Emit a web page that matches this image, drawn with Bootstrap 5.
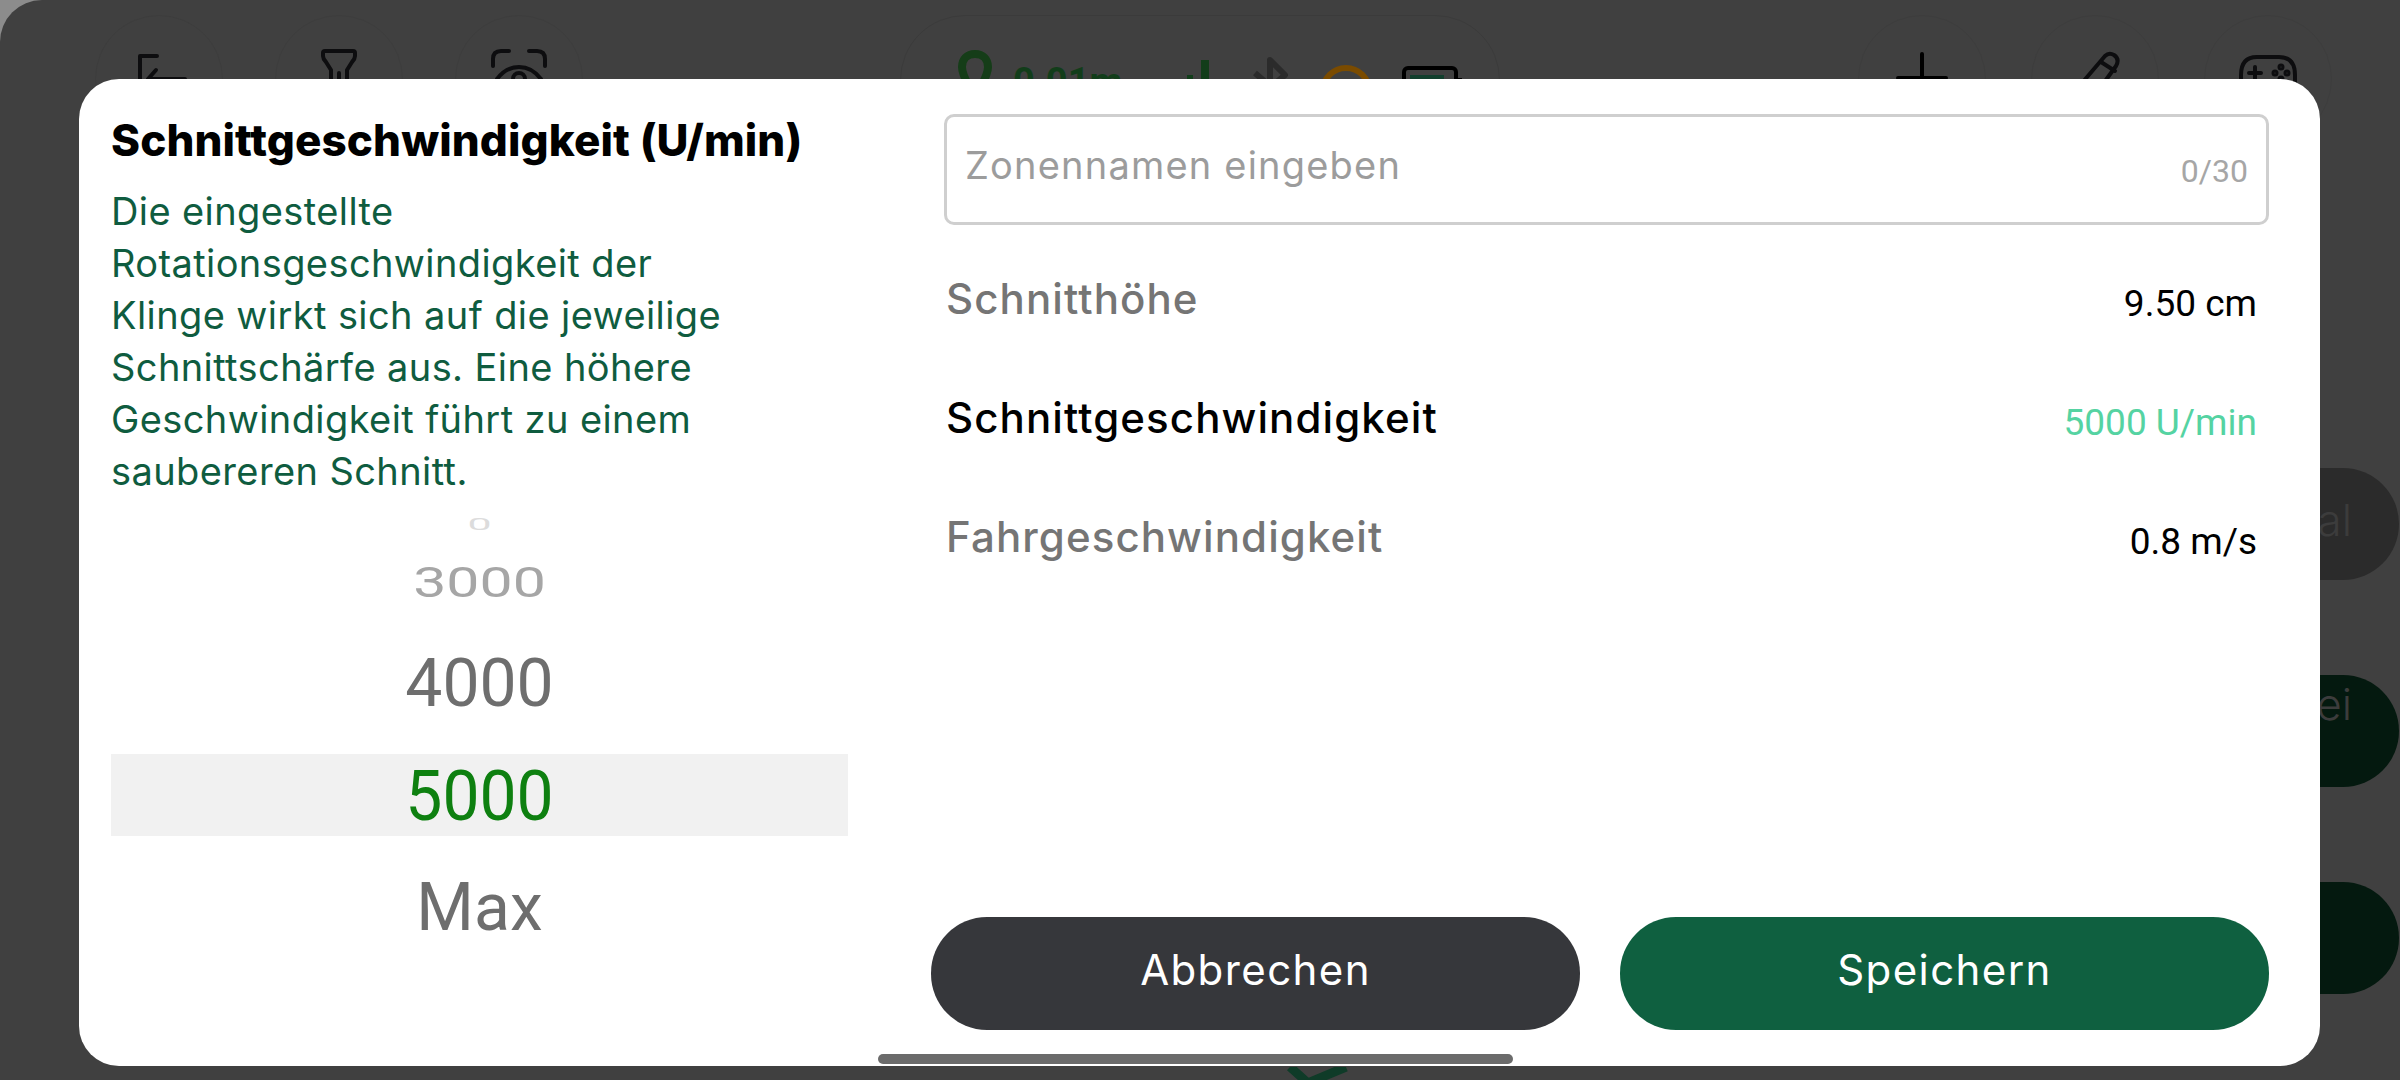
<!DOCTYPE html>
<html lang="de">
<head>
  <meta charset="UTF-8">
  <title>Schnittgeschwindigkeit</title>
  <link href="https://cdn.jsdelivr.net/npm/bootstrap@5.3.0/dist/css/bootstrap.min.css" rel="stylesheet">
  <style>
    html, body { height: 100%; margin: 0; }
    body { background: #8c8c8c; font-family: "Inter", "Liberation Sans", sans-serif; overflow: hidden; }

    /* dimmed screen behind the dialog */
    .screen { width: 2400px; height: 1080px; background: #404040; border-top-left-radius: 42px; overflow: hidden; }
    .topbar { padding: 15px 68px 0 95px; }
    .left-btns { gap: 52px; }
    .right-btns { gap: 45px; }
    .round-btn { width: 128px; height: 128px; border: 1px solid #3d3d3d; border-radius: 50%; }
    .ico-back { margin-left: 5px; }
    .ico-plus { padding-top: 36px; }
    .ico-pen { padding-top: 34px; }
    .ico-pad { padding-top: 38px; }
    .status-pill { width: 600px; height: 130px; margin-left: 317px; padding: 34px 0 0 57px; border: 1px solid #3b3b3b; border-radius: 70px; }
    .dist-txt { font-family: "Roboto", sans-serif; font-size: 38px; font-weight: 700; color: #123d1a; line-height: 1; margin: 13px 65px 0 21px; }
    .st-bt { margin: 7px 30px 0 41px; }
    .st-arc { margin: 15px 30px 0 0; }
    .st-bat { margin-top: 16px; }
    .side-pills { margin-top: 323px; gap: 95px; }
    .side-pill { width: 400px; height: 112px; margin-right: 1px; padding-right: 47px; border-radius: 56px; font-size: 44px; color: #3c3c3c; font-weight: 300; }
    .side-grey { background: #2b2b2b; line-height: 104px; }
    .side-dark { background: #04190f; line-height: 58px; }
    .bg-check { margin: 73px 0 0 1280px; }

    /* dialog */
    .dialog { position: absolute; left: 79px; top: 79px; width: 2241px; height: 987px; background: #fff; border-radius: 40px; padding: 35px 51px 36px 32px; }
    .left-col { width: 737px; margin-right: 83px; flex-shrink: 0; }
    .dlg-title { font-size: 44px; font-weight: 800; letter-spacing: .1px; line-height: 52px; color: #000; margin: 0 0 19px; }
    .dlg-desc { font-size: 38px; letter-spacing: .4px; line-height: 52px; color: #0f5c3f; margin: 0 0 15px; }

    .wheel { gap: 30px; font-family: "Roboto", sans-serif; }
    .wheel-item { display: flex; align-items: center; justify-content: center; height: 82px; font-size: 66px; color: #6e6e6e; }
    .wheel-item span { display: block; }
    .wheel-far { height: 24px; margin-bottom: -14px; font-size: 43px; color: #dcdcdc; }
    .wheel-far span { transform: scaleY(.4); }
    .wheel-near { height: 60px; padding-top: 2px; font-size: 59px; color: #a6a6a6; }
    .wheel-near span { transform: scaleY(.72); }
    .wheel-sel { background: #f1f1f1; color: #0e8010; }
    .wheel-sel span { transform: scaleY(1.07); }

    .zone-box { height: 111px; margin-left: 13px; padding: 0 18px 0 18px; border: 3px solid #cfcfcf; border-radius: 10px; }
    .zone-box input { font-size: 38px; letter-spacing: 1.2px; padding: 0; margin-top: -8px; color: #333; }
    .zone-box input::placeholder { color: #9c9c9c; }
    .zone-count { font-family: "Roboto", sans-serif; font-size: 32px; color: #a6a6a6; margin-top: 2px; }

    .param-rows { margin: 45px 12px 0 15px; gap: 59px; }
    .param-row { height: 60px; }
    .param-name { font-size: 42px; font-weight: 500; letter-spacing: 1.1px; color: #757575; margin-top: -3px; }
    .param-val { font-family: "Roboto", sans-serif; font-size: 37px; color: #000; margin-top: 7px; }
    .param-on .param-name { color: #000; }
    .param-on .param-val { color: #55d3a2; }

    .act-btn { width: 649px; height: 113px; border: 0; border-radius: 56px; padding: 0 0 8px; color: #fff; font-size: 42px; letter-spacing: 1.4px; }
    .act-grey, .act-grey:hover { background: #36373b; color: #fff; }
    .act-green, .act-green:hover { background: #0f6040; color: #fff; }
    .home-bar { position: absolute; left: 878px; top: 1054px; width: 635px; height: 10px; border-radius: 5px; background: #6b6b6b; }
  </style>
</head>
<body>

<div class="screen">
  <div class="topbar d-flex">
    <div class="left-btns d-flex">
      <div class="round-btn d-flex align-items-center justify-content-center">
        <svg class="ico-back" width="50" height="52" viewBox="0 0 50 52" fill="none" stroke="#0d0d0f" stroke-width="4" stroke-linecap="round" stroke-linejoin="round"><path d="M20 3H3V49"/><path d="M48 26H11l8-9M11 26l8 9"/></svg>
      </div>
      <div class="round-btn d-flex align-items-center justify-content-center">
        <svg width="38" height="62" viewBox="0 0 38 62" fill="none" stroke="#0d0d0f" stroke-width="4" stroke-linecap="round" stroke-linejoin="round"><path d="M5 3h28q2 0 2 2v3q0 3-3 6l-5 8v36H11V22l-5-8Q3 11 3 8V5q0-2 2-2z"/><path d="M19 25v9"/></svg>
      </div>
      <div class="round-btn d-flex align-items-center justify-content-center">
        <svg width="58" height="62" viewBox="0 0 58 62" fill="none" stroke="#0d0d0f" stroke-width="4" stroke-linecap="round" stroke-linejoin="round"><path d="M3 18V11q0-8 8-8h8M39 3h8q8 0 8 8v7M3 44v7q0 8 8 8h8M39 59h8q8 0 8-8v-7"/><path d="M7 31q9-12 22-12t22 12q-9 12-22 12T7 31z"/><circle cx="29" cy="31" r="6"/></svg>
      </div>
    </div>

    <div class="status-pill d-flex align-items-start">
      <svg width="34" height="50" viewBox="0 0 34 50" fill="none"><path d="M17 4C9 4 4 9 4 17c0 10 13 29 13 29s13-19 13-29c0-8-5-13-13-13z" stroke="#153d18" stroke-width="8"/></svg>
      <span class="dist-txt">0.01m</span>
      <svg width="24" height="60" viewBox="0 0 24 60" fill="#123d1a"><rect x="0" y="25" width="6" height="35"/><rect x="14" y="10" width="8" height="50"/></svg>
      <svg class="st-bt" width="38" height="60" viewBox="0 0 38 60" fill="none" stroke="#2b2b2b" stroke-width="6" stroke-linejoin="round"><path d="M3 16l30 26-15 15V3l15 15L3 44"/></svg>
      <svg class="st-arc" width="52" height="40" viewBox="0 0 52 40" fill="none" stroke="#7a4b00" stroke-width="6"><path d="M3 26a23 23 0 0 1 46 0"/></svg>
      <svg class="st-bat" width="62" height="40" viewBox="0 0 62 40" fill="none"><rect x="2" y="2" width="52" height="36" rx="4" stroke="#000" stroke-width="4"/><rect x="8" y="9" width="34" height="22" fill="#123f2d"/><path d="M56 12h4v16h-4z" fill="#000"/></svg>
    </div>

    <div class="right-btns d-flex ms-auto">
      <div class="round-btn ico-plus d-flex justify-content-center">
        <svg width="52" height="52" viewBox="0 0 52 52" fill="none" stroke="#000" stroke-width="4" stroke-linecap="round"><path d="M26 2v48M2 26h48"/></svg>
      </div>
      <div class="round-btn ico-pen d-flex justify-content-center">
        <svg width="60" height="60" viewBox="0 0 60 60" fill="none" stroke="#0d0d0f" stroke-width="4" stroke-linecap="round" stroke-linejoin="round"><path d="M40 6q4-4 9-1 6 4 2 11L25 52l-16 5 2-17z"/><path d="M36 12l14 9"/></svg>
      </div>
      <div class="round-btn ico-pad d-flex justify-content-center">
        <svg width="58" height="50" viewBox="0 0 58 50" fill="none" stroke="#0d0d0f" stroke-width="4" stroke-linecap="round"><path d="M18 3h22q16 0 16 18v16q0 9-7 9-5 0-8-6l-2-4H19l-2 4q-3 6-8 6-7 0-7-9V21Q2 3 18 3z"/><path d="M10 19h12M16 13v12"/><circle cx="42" cy="13" r="1.5"/><circle cx="36" cy="19" r="1.5"/><circle cx="48" cy="19" r="1.5"/><circle cx="42" cy="25" r="1.5"/></svg>
      </div>
    </div>
  </div>

  <div class="side-pills d-flex flex-column align-items-end">
    <div class="side-pill side-grey text-end">al</div>
    <div class="side-pill side-dark text-end">ei</div>
    <div class="side-pill side-dark"></div>
  </div>

  <svg class="bg-check d-block" width="70" height="30" viewBox="0 0 70 30" fill="none" stroke="#0f3b28" stroke-width="9"><path d="M10 0l18 16L66 0"/></svg>
</div>

<div class="dialog d-flex">
  <div class="left-col">
    <h5 class="dlg-title">Schnittgeschwindigkeit (U/min)</h5>
    <p class="dlg-desc">Die eingestellte<br>Rotationsgeschwindigkeit der<br>Klinge wirkt sich auf die jeweilige<br>Schnittschärfe aus. Eine höhere<br>Geschwindigkeit führt zu einem<br>saubereren Schnitt.</p>
    <div class="wheel d-flex flex-column">
      <div class="wheel-item wheel-far"><span>0</span></div>
      <div class="wheel-item wheel-near"><span>3000</span></div>
      <div class="wheel-item"><span>4000</span></div>
      <div class="wheel-item wheel-sel"><span>5000</span></div>
      <div class="wheel-item"><span>Max</span></div>
    </div>
  </div>

  <div class="d-flex flex-column flex-grow-1">
    <div class="zone-box d-flex align-items-center">
      <input type="text" class="form-control border-0 shadow-none bg-transparent" placeholder="Zonennamen eingeben">
      <span class="zone-count">0/30</span>
    </div>

    <div class="param-rows d-flex flex-column">
      <div class="param-row d-flex justify-content-between align-items-center">
        <span class="param-name">Schnitthöhe</span><span class="param-val">9.50 cm</span>
      </div>
      <div class="param-row param-on d-flex justify-content-between align-items-center">
        <span class="param-name">Schnittgeschwindigkeit</span><span class="param-val">5000 U/min</span>
      </div>
      <div class="param-row d-flex justify-content-between align-items-center">
        <span class="param-name">Fahrgeschwindigkeit</span><span class="param-val">0.8 m/s</span>
      </div>
    </div>

    <div class="d-flex justify-content-between mt-auto">
      <button type="button" class="btn act-btn act-grey">Abbrechen</button>
      <button type="button" class="btn act-btn act-green">Speichern</button>
    </div>
  </div>
</div>

<div class="home-bar"></div>

<script src="https://cdn.jsdelivr.net/npm/bootstrap@5.3.0/dist/js/bootstrap.bundle.min.js"></script>
</body>
</html>
